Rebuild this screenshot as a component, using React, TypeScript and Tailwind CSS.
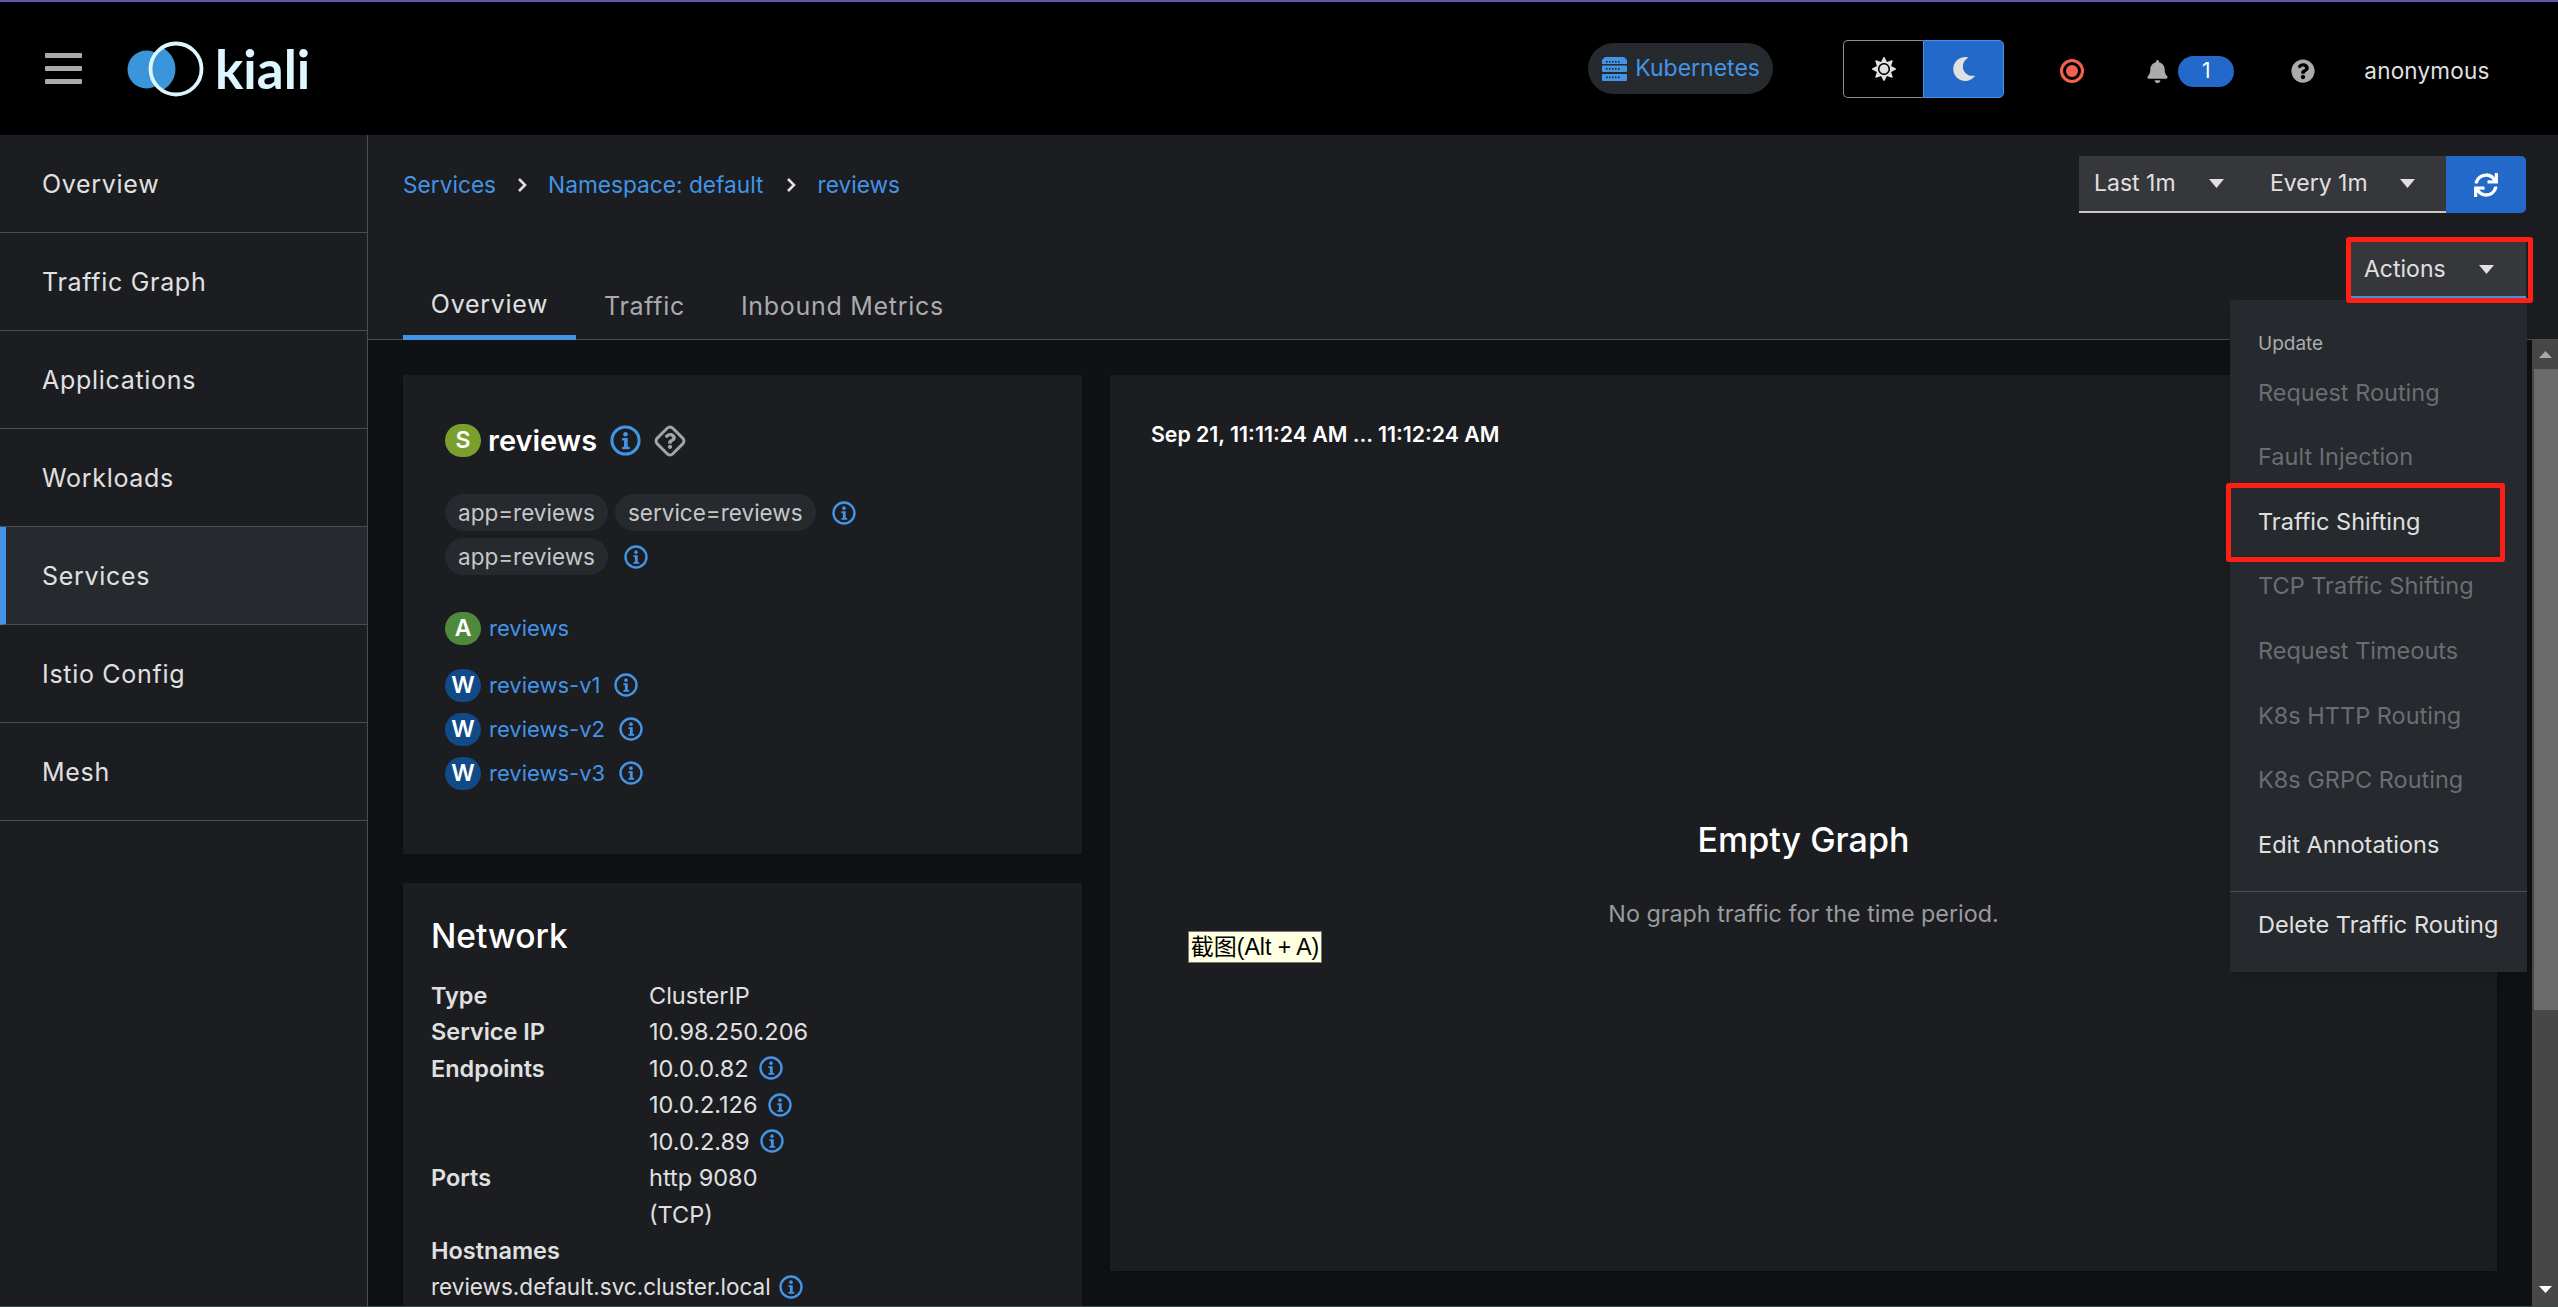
import React from "react";
import { FaBell, FaMoon, FaQuestion, FaQuestionCircle, FaSun, FaSync } from "react-icons/fa";

const font = { fontFamily: 'Inter, "Noto Sans CJK SC", sans-serif' };

function Info({ size = 24 }: { size?: number }) {
  return (
    <svg width={size} height={size} viewBox="0 0 32 32" className="shrink-0">
      <circle cx="16" cy="16" r="14" fill="none" stroke="#4394e5" strokeWidth="3.2" />
      <circle cx="16" cy="9.5" r="2.4" fill="#4394e5" />
      <path d="M12.5 13.5h5.8v9h2v2.6h-7.8v-2.6h2v-6.4h-2z" fill="#4394e5" />
    </svg>
  );
}

function Caret({ color = "#e0e0e0" }: { color?: string }) {
  return (
    <svg width="15" height="9" viewBox="0 0 15 9" className="shrink-0">
      <path d="M0 0h15L7.5 9z" fill={color} />
    </svg>
  );
}

function Chevron() {
  return (
    <svg width="10" height="16" viewBox="0 0 10 16" className="shrink-0">
      <path d="M2 2l6 6-6 6" fill="none" stroke="#e0e0e0" strokeWidth="2.6" />
    </svg>
  );
}

function Logo() {
  return (
    <svg width="82" height="58" viewBox="0 0 82 58" className="shrink-0">
      <defs>
        <clipPath id="ringInner">
          <circle cx="49" cy="29" r="25" />
        </clipPath>
      </defs>
      <circle cx="19.5" cy="29.5" r="19" fill="#3b95da" />
      <ellipse cx="24" cy="29" rx="24.5" ry="24" fill="#3b95da" clipPath="url(#ringInner)" />
      <circle cx="49" cy="29" r="25.500" fill="none" stroke="#def6ff" strokeWidth="3.8" />
    </svg>
  );
}

function ServerIcon() {
  const dots = [4, 7, 10, 13, 16];
  return (
    <svg width="25" height="24" viewBox="0 0 25 24" className="shrink-0">
      <path d="M3 0h19l3 3v4H0V3z" fill="#4394e5" />
      <rect x="0" y="8.5" width="25" height="6.5" rx="1" fill="#4394e5" />
      <rect x="0" y="17" width="25" height="7" rx="1" fill="#4394e5" />
      {dots.map((x) => (
        <React.Fragment key={x}>
          <rect x={x} y="4" width="1.6" height="1.6" fill="#26292d" />
          <rect x={x} y="11" width="1.6" height="1.6" fill="#26292d" />
          <rect x={x} y="19.5" width="1.6" height="1.6" fill="#26292d" />
        </React.Fragment>
      ))}
    </svg>
  );
}

function Header() {
  return (
    <header className="flex h-[135px] shrink-0 items-center border-t-2 border-[#6753ac] bg-black pl-[45px]">
      <div className="flex w-[37px] flex-col gap-[8px]">
        <div className="h-[5px] rounded-[1px] bg-[#ababab]" />
        <div className="h-[5px] rounded-[1px] bg-[#ababab]" />
        <div className="h-[5px] rounded-[1px] bg-[#ababab]" />
      </div>
      <div className="ml-[45px] flex items-center">
        <Logo />
        <span className="ml-[6px] text-[53px] leading-none font-bold text-[#def6ff]" style={{ fontFamily: "Lato, sans-serif" }}>kiali</span>
      </div>
      <div className="ml-[1278px] flex h-[51px] w-[185px] items-center rounded-[26px] bg-[#26292d] pl-[14px]">
        <ServerIcon />
        <span className="ml-[8px] text-[23px] text-[#4394e5]">Kubernetes</span>
      </div>
      <div className="ml-[70px] flex h-[58px] w-[161px]">
        <div className="flex flex-1 items-center justify-center rounded-l-[5px] border border-r-0 border-[#8a8d90]">
          <FaSun size={24} color="#e0e0e0" />
        </div>
        <div className="flex flex-1 items-center justify-center rounded-r-[5px] border border-[#4394e5] bg-[#2269c9]">
          <FaMoon size={24} color="#e0e0e0" />
        </div>
      </div>
      <div className="mt-[5px] ml-[56px] flex h-[24px] w-[24px] items-center justify-center rounded-full border-[3px] border-[#f0624f]">
        <div className="h-[12px] w-[12px] rounded-full bg-[#f0624f]" />
      </div>
      <div className="mt-[5px] ml-[62px]"><FaBell size={23} color="#ababab" /></div>
      <div className="mt-[5px] ml-[9px] flex h-[31px] w-[56px] items-center justify-center rounded-full bg-[#2269c9] text-[21px] text-white">1</div>
      <div className="mt-[5px] ml-[57px]"><FaQuestionCircle size={24} color="#ababab" /></div>
      <span className="mt-[5px] ml-[49px] text-[22.5px] tracking-[0.2px] text-[#e0e0e0]">anonymous</span>
    </header>
  );
}

const navItems = ["Overview", "Traffic Graph", "Applications", "Workloads", "Services", "Istio Config", "Mesh"];

function Sidebar() {
  return (
    <aside className="w-[368px] shrink-0 border-r border-[#4a4c50] bg-[#1b1d21]">
      {navItems.map((item) => (
        <div
          key={item}
          className={`flex h-[98px] items-center border-b border-[#4a4c50] pt-[2px] text-[25px] tracking-[0.7px] text-[#e0e0e0] ${
            item === "Services" ? "border-l-[6px] border-l-[#4394e5] bg-[#26292d] pl-[36px]" : "pl-[42px]"
          }`}
        >
          {item}
        </div>
      ))}
    </aside>
  );
}

function TopBar() {
  return (
    <div className="flex h-[205px] shrink-0 justify-between border-b border-[#4a4c50] bg-[#1b1d21] pr-[32px] pl-[35px]">
      <div className="flex flex-col justify-between">
        <div className="mt-[35px] flex items-center text-[22.7px] leading-[30px] text-[#4394e5]">
          <span>Services</span>
          <span className="mx-[21px] flex"><Chevron /></span>
          <span>Namespace: default</span>
          <span className="mx-[22px] flex"><Chevron /></span>
          <span>reviews</span>
        </div>
        <div className="flex text-[25px] tracking-[0.7px]">
          <div className="-mb-px flex h-[71px] w-[173px] items-center justify-center border-b-[5px] border-[#4394e5] pt-[5px] text-[#e0e0e0]">Overview</div>
          <div className="flex h-[70px] items-center pt-[5px] pl-[28px] text-[#aaabac]">Traffic</div>
          <div className="flex h-[70px] items-center pt-[5px] pl-[56px] text-[#aaabac]">Inbound Metrics</div>
        </div>
      </div>
      <div className="flex flex-col items-end">
        <div className="mt-[21px] flex h-[57px] text-[23px] text-[#e0e0e0]">
          <div className="flex w-[367px] items-center border-b-2 border-[#c7c7c7] bg-[#36373b] pl-[15px]">
            <span className="w-[115px]">Last 1m</span>
            <Caret />
            <span className="ml-[46px] w-[130px]">Every 1m</span>
            <Caret />
          </div>
          <div className="flex w-[80px] items-center justify-center rounded-r-[5px] bg-[#2269c9]">
            <FaSync size={24} color="#ffffff" />
          </div>
        </div>
        <div className="mt-[29px] flex h-[56px] w-[175px] items-center border-b-2 border-[#4394e5] bg-[#36373b] pl-[13px] text-[23px] text-[#e0e0e0]">
          <span className="w-[115px]">Actions</span>
          <Caret />
        </div>
      </div>
    </div>
  );
}

function Badge({ letter, color }: { letter: string; color: string }) {
  return (
    <span className={`flex h-[33px] w-[36px] shrink-0 items-center justify-center rounded-full text-[23px] font-semibold text-white ${color}`}>{letter}</span>
  );
}

function Pill({ children }: { children: React.ReactNode }) {
  return <span className="flex h-[37px] items-center rounded-full bg-[#26292d] px-[13px] text-[22.5px] text-[#c7c7c7]">{children}</span>;
}

function Workload({ name }: { name: string }) {
  return (
    <div className="flex h-[44px] items-center">
      <Badge letter="W" color="bg-[#114a86]" />
      <span className="ml-[8px] text-[22px] text-[#4394e5]">{name}</span>
      <span className="ml-[14px]"><Info /></span>
    </div>
  );
}

function ServiceCard() {
  return (
    <section className="h-[479px] shrink-0 bg-[#1b1d21] pt-[49px] pl-[42px] shadow-md">
      <div className="flex h-[33px] items-center">
        <Badge letter="S" color="bg-[#7b9f2f]" />
        <span className="ml-[7px] text-[29px] font-semibold text-white">reviews</span>
        <span className="ml-[13px]"><Info size={31} /></span>
        <svg width="32" height="32" viewBox="0 0 32 32" className="ml-[13px] overflow-visible">
          <rect x="5" y="5" width="22" height="22" rx="4" transform="rotate(45 16 16)" fill="none" stroke="#a3a4a6" strokeWidth="3" />
          <foreignObject x="8" y="8" width="16" height="16">
            <FaQuestion size={16} color="#a3a4a6" />
          </foreignObject>
        </svg>
      </div>
      <div className="mt-[37px] flex items-center">
        <Pill>app=reviews</Pill>
        <span className="ml-[7px]"><Pill>service=reviews</Pill></span>
        <span className="ml-[16px]"><Info /></span>
      </div>
      <div className="mt-[7px] flex items-center">
        <Pill>app=reviews</Pill>
        <span className="ml-[16px]"><Info /></span>
      </div>
      <div className="mt-[37px] flex items-center">
        <Badge letter="A" color="bg-[#4f8a3c]" />
        <span className="ml-[8px] text-[22px] text-[#4394e5]">reviews</span>
      </div>
      <div className="mt-[18px] flex flex-col">
        <Workload name="reviews-v1" />
        <Workload name="reviews-v2" />
        <Workload name="reviews-v3" />
      </div>
    </section>
  );
}

function KV({ k, children }: { k?: string; children?: React.ReactNode }) {
  return (
    <div className="flex h-[36.5px] items-center">
      <span className="w-[218px] shrink-0 font-semibold text-[#e0e0e0]">{k}</span>
      <span className="flex items-center gap-[10px] text-[#e0e0e0]">{children}</span>
    </div>
  );
}

function NetworkCard() {
  return (
    <section className="min-h-0 flex-1 overflow-hidden bg-[#1b1d21] pt-[32px] pl-[28px] text-[23.5px] shadow-md">
      <h2 className="mb-[20px] text-[33.5px] leading-[42px] font-medium text-white">Network</h2>
      <KV k="Type">ClusterIP</KV>
      <KV k="Service IP">10.98.250.206</KV>
      <KV k="Endpoints">10.0.0.82 <Info /></KV>
      <KV>10.0.2.126 <Info /></KV>
      <KV>10.0.2.89 <Info /></KV>
      <KV k="Ports">http 9080</KV>
      <KV>(TCP)</KV>
      <KV k="Hostnames" />
      <div className="flex h-[36.5px] items-center gap-[8px] text-[22.5px] text-[#e0e0e0]">reviews.default.svc.cluster.local <Info /></div>
    </section>
  );
}

function GraphCard() {
  return (
    <section className="flex h-[896px] min-w-0 flex-1 flex-col bg-[#1b1d21] pt-[43px] pl-[41px] shadow-md">
      <div className="text-[21.3px] leading-[32px] font-semibold text-white">Sep 21, 11:11:24 AM ... 11:12:24 AM</div>
      <div className="mt-[368px] flex flex-col items-center pr-[41px]">
        <div className="text-[34px] leading-[44px] font-medium text-white">Empty Graph</div>
        <div className="mt-[36px] text-[23.3px] leading-[32px] text-[#9a9b9d]">No graph traffic for the time period.</div>
      </div>
    </section>
  );
}

function Scrollbar() {
  return (
    <div className="flex w-[26px] shrink-0 flex-col bg-[#474747]">
      <div className="flex h-[29px] shrink-0 items-center justify-center">
        <svg width="13" height="7" viewBox="0 0 13 7"><path d="M0 7h13L6.500 0z" fill="#a8a8a8" /></svg>
      </div>
      <div className="ml-[2px] h-[641px] shrink-0 bg-[#6b6b6b]" />
      <div className="flex flex-1 items-end justify-center pb-[13px]">
        <svg width="13" height="7" viewBox="0 0 13 7"><path d="M0 0h13L6.500 7z" fill="#ffffff" /></svg>
      </div>
    </div>
  );
}

const menuItems: { label: string; on?: boolean }[] = [
  { label: "Request Routing" },
  { label: "Fault Injection" },
  { label: "Traffic Shifting", on: true },
  { label: "TCP Traffic Shifting" },
  { label: "Request Timeouts" },
  { label: "K8s HTTP Routing" },
  { label: "K8s GRPC Routing" },
  { label: "Edit Annotations", on: true },
];

function ActionsMenu() {
  return (
    <div className="absolute top-[165px] left-[1862px] h-[672px] w-[297px] bg-[#26292d] pt-[29px] pl-[28px] text-[23.5px] shadow-lg">
      <div className="mb-[1px] h-[30px] text-[19px] leading-[30px] text-[#aaabac]">Update</div>
      {menuItems.map((m) => (
        <div key={m.label} className={`flex h-[64.6px] items-center ${m.on ? "text-[#e0e0e0]" : "text-[#6a6e73]"}`}>{m.label}</div>
      ))}
      <div className="-ml-[28px] mt-[14px] h-px bg-[#4a4c50]" />
      <div className="flex h-[66px] items-center text-[#e0e0e0]">Delete Traffic Routing</div>
    </div>
  );
}

export default function App() {
  return (
    <div className="flex h-[1307px] w-[2558px] flex-col overflow-hidden border-b border-[#3f4a48] bg-[#0f1214]" style={font}>
      <Header />
      <div className="flex min-h-0 flex-1">
        <Sidebar />
        <main className="relative flex min-w-0 flex-1 flex-col">
          <TopBar />
          <div className="flex min-h-0 flex-1">
            <div className="flex min-w-0 flex-1 gap-[28px] pt-[35px] pr-[35px] pl-[35px]">
              <div className="flex w-[679px] shrink-0 flex-col gap-[29px]">
                <ServiceCard />
                <NetworkCard />
              </div>
              <GraphCard />
            </div>
            <Scrollbar />
          </div>
          <ActionsMenu />
          <div className="absolute top-[102px] left-[1978px] h-[66px] w-[187px] rounded-[3px] border-[5px] border-[#ff2015]" />
          <div className="absolute top-[348px] left-[1858px] h-[79px] w-[279px] rounded-[3px] border-[5px] border-[#ff2015]" />
          <div className="absolute top-[796px] left-[820px] flex h-[32px] w-[134px] items-center justify-center border border-[#767676] bg-[#ffffe1] text-[23px] text-black" style={{ fontFamily: '"Liberation Sans", "Noto Sans CJK SC", sans-serif' }}>截图(Alt + A)</div>
        </main>
      </div>
    </div>
  );
}
